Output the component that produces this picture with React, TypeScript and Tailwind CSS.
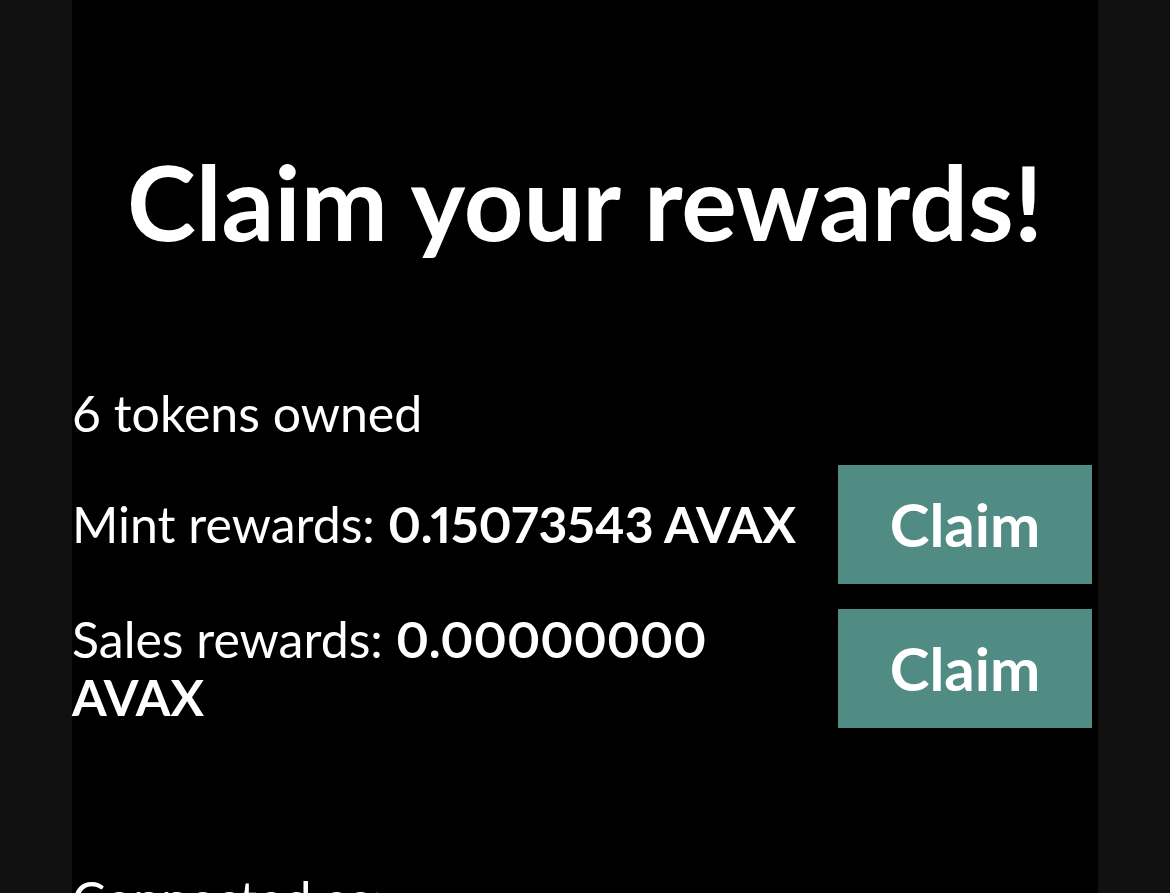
import React from 'react';

const rows = [
  { label: 'Mint rewards:', amount: '0.15073543 AVAX' },
  { label: 'Sales rewards:', amount: '0.00000000 AVAX' },
];

export default function App() {
  return (
    <div className="min-h-screen bg-[#111111]" style={{ fontFamily: 'Lato, "Open Sans", sans-serif' }}>
      <div className="mx-auto w-[1026px] min-h-screen bg-black text-white">
        <h1 className="pt-[139px] text-center text-[104px] font-bold leading-[1.2]">Claim your rewards!</h1>

        <div className="mt-[119px]">
          <p className="text-[50px] leading-[60px]">6 tokens owned</p>

          <div className="mt-[22px] flex flex-col gap-[25px] pr-[6px]">
            {rows.map((r) => (
              <div key={r.label} className="flex items-center justify-between">
                <p className="w-[740px] text-[50px] leading-[58px] proportional-nums">
                  {r.label} <span className="font-bold">{r.amount}</span>
                </p>
                <button className="h-[119px] w-[254px] bg-[#518c84] text-[60px] font-bold text-white">
                  Claim
                </button>
              </div>
            ))}
          </div>

          <p className="mt-[142px] text-[50px] leading-[58px]">Connected as:</p>
        </div>
      </div>
    </div>
  );
}
